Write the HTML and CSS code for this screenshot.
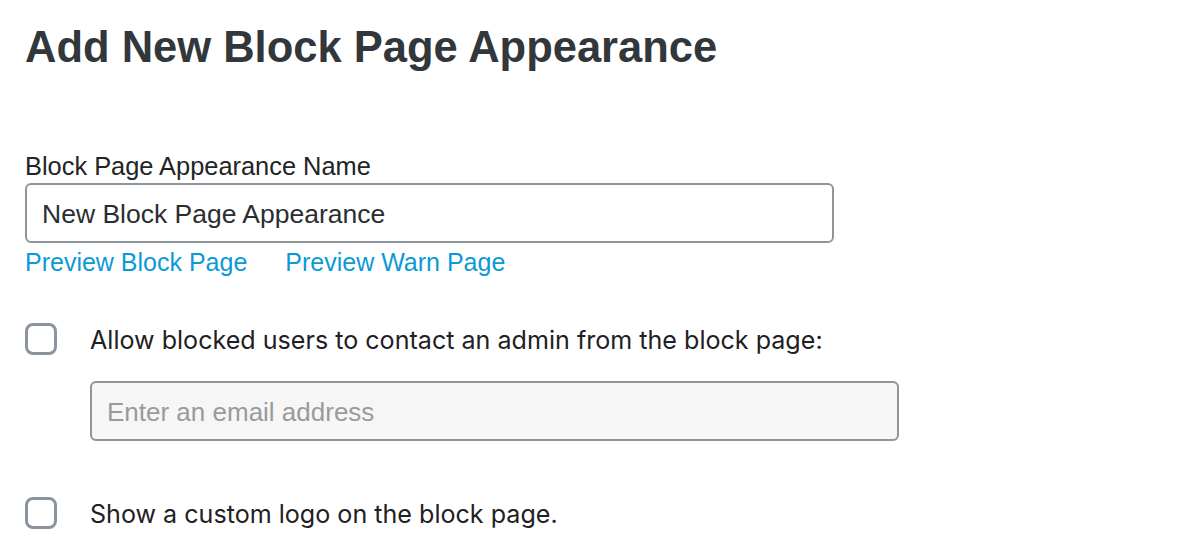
FILE: index.html
```html
<!DOCTYPE html>
<html lang="en">
<head>
<meta charset="utf-8">
<title>Add New Block Page Appearance</title>
<link rel="stylesheet" href="styles.css">
</head>
<body>
<main class="page">
  <h1 class="title">Add New Block Page Appearance</h1>
  <div class="field">
    <label class="field-label" for="name">Block Page Appearance Name</label>
    <input class="text-input name-input" id="name" type="text" value="New Block Page Appearance">
    <div class="links">
      <a class="link" href="#">Preview Block Page</a>
      <a class="link" href="#">Preview Warn Page</a>
    </div>
  </div>
  <label class="check-row first-row">
    <input class="checkbox" type="checkbox">
    <span class="check-text">Allow blocked users to contact an admin from the block page:</span>
  </label>
  <input class="text-input email-input" type="text" placeholder="Enter an email address" disabled>
  <label class="check-row second-row">
    <input class="checkbox" type="checkbox">
    <span class="check-text">Show a custom logo on the block page.</span>
  </label>
</main>
</body>
</html>
```

FILE: styles.css
```css
html, body {
  margin: 0;
  padding: 0;
  background: #ffffff;
}

.page {
  display: flex;
  flex-direction: column;
  align-items: flex-start;
  padding: 21px 0 0 25px;
  font-family: "Liberation Sans", Arial, sans-serif;
}

.title {
  margin: 0;
  font-size: 43.5px;
  line-height: 52px;
  font-weight: 700;
  color: #32373c;
}

.field {
  display: flex;
  flex-direction: column;
  align-items: flex-start;
  margin-top: 78px;
}

.field-label {
  margin-bottom: 2px;
  font-size: 25.4px;
  line-height: 30px;
  color: #222426;
}

.text-input {
  box-sizing: border-box;
  width: 809px;
  height: 60px;
  margin: 0;
  border: 2px solid #8d959d;
  border-radius: 6px;
  font-family: "Liberation Sans", Arial, sans-serif;
  font-size: 26.5px;
  color: #2b2e31;
  outline: none;
}

.name-input {
  padding: 3px 15px 0;
  background: #ffffff;
}

.email-input {
  padding: 3px 15px 0;
  margin: 26px 0 0 65px;
  font-size: 26px;
  background: #f6f6f6;
}

.email-input::placeholder {
  color: #9a9a9a;
}

.links {
  display: flex;
  gap: 38px;
  margin-top: 4px;
}

.link {
  font-size: 25px;
  line-height: 30px;
  color: #0b9ad6;
  text-decoration: none;
}

.check-row {
  display: flex;
  align-items: flex-start;
  gap: 33px;
}

.first-row {
  margin-top: 46px;
}

.second-row {
  margin-top: 56px;
}

.checkbox {
  appearance: none;
  -webkit-appearance: none;
  box-sizing: border-box;
  width: 32px;
  height: 32px;
  margin: 0;
  border: 3px solid #8b949c;
  border-radius: 8px;
  background: #ffffff;
}

.check-text {
  margin-top: 2px;
  font-family: Inter, "Noto Sans", sans-serif;
  font-size: 25.1px;
  line-height: 30px;
  color: #1f2124;
}
```
